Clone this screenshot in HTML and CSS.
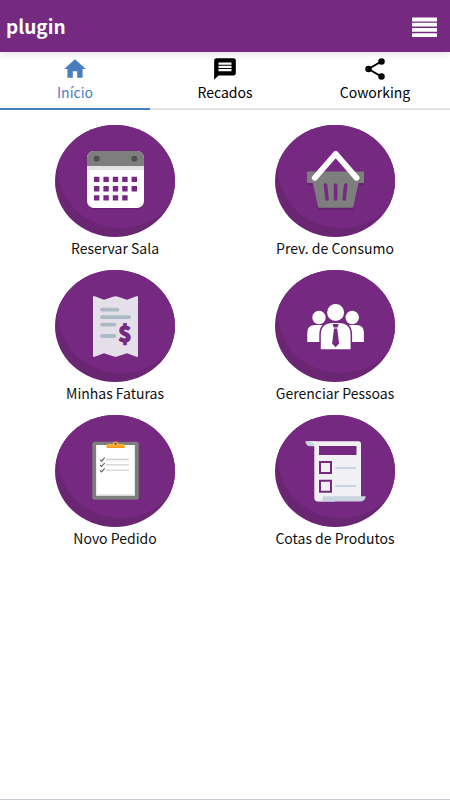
FILE: index.html
```html
<!DOCTYPE html>
<html lang="pt-BR">
<head>
<meta charset="utf-8">
<meta name="viewport" content="width=device-width, initial-scale=1">
<title>plugin</title>
<link rel="stylesheet" href="styles.css">
</head>
<body>
<header class="topbar">
  <h1 class="brand">plugin</h1>
  <button class="menu" type="button" aria-label="Menu">
    <svg width="25" height="20" viewBox="0 0 25 20" fill="#fff" aria-hidden="true">
      <rect y="0.500" width="25" height="4" rx="0.6"/><rect y="5.8" width="25" height="3.8" rx="0.6"/><rect y="11" width="25" height="3.8" rx="0.6"/><rect y="16.200" width="25" height="3.800" rx="0.6"/>
    </svg>
  </button>
</header>
<nav class="tabs">
  <a class="tab active" href="#inicio" aria-current="page">
    <svg class="tab-icon" viewBox="0 0 24 24" aria-hidden="true"><path d="M10 20v-6h4v6h5v-8h3L12 3 2 12h3v8z"/></svg>
    <span>Início</span>
  </a>
  <a class="tab" href="#recados">
    <svg class="tab-icon" viewBox="0 0 24 24" aria-hidden="true"><path d="M20 2H4c-1.1 0-2 .9-2 2v18l4-4h14c1.1 0 2-.9 2-2V4c0-1.100-.9-2-2-2zm-2 12H6v-2h12v2zm0-3H6V9h12v2zm0-3H6V6h12v2z"/></svg>
    <span>Recados</span>
  </a>
  <a class="tab" href="#coworking">
    <svg class="tab-icon" viewBox="0 0 24 24" aria-hidden="true"><path d="M6 12 18 5M6 12l12 7" fill="none" stroke="currentColor" stroke-width="1.700"/><circle cx="6" cy="12" r="3"/><circle cx="18" cy="5" r="3"/><circle cx="18" cy="19" r="3"/></svg>
    <span>Coworking</span>
  </a>
</nav>
<svg class="defs" width="0" height="0" aria-hidden="true">
  <defs>
    <clipPath id="disc-clip"><ellipse cx="60" cy="56" rx="60" ry="56"/></clipPath>
    <g id="disc">
      <ellipse cx="60" cy="56" rx="60" ry="56" fill="#6a2573"/>
      <ellipse cx="66" cy="44" rx="63" ry="59" fill="#762981" clip-path="url(#disc-clip)"/>
    </g>
  </defs>
</svg>
<main class="grid">
  <a class="tile" href="#reservar">
    <svg class="tile-icon" viewBox="0 0 120 112" aria-hidden="true">
      <use href="#disc"/>
      <rect x="32" y="27" width="57" height="57" rx="7" fill="#5d1d68" opacity="0.6"/>
      <rect x="32" y="26" width="57" height="57" rx="7" fill="#fff"/>
      <path d="M32 41h57v4H32z" fill="#e4e0e6"/>
      <path d="M32 41v-8a7 7 0 0 1 7-7h43a7 7 0 0 1 7 7v8z" fill="#7e7e7e"/>
      <circle cx="41.700" cy="33.700" r="3" fill="#4f4f4f"/><circle cx="79.300" cy="33.700" r="3" fill="#4f4f4f"/>
      <path fill="#762981" d="M39 51.700h5.400v5.400H39zM48.400 51.700h5.400v5.400h-5.400zM57.800 51.700h5.400v5.400h-5.400zM67.200 51.700h5.400v5.400h-5.400zM76.600 51.700H82v5.400h-5.400zM39 61h5.400v5.400H39zM48.400 61h5.400v5.400h-5.400zM57.800 61h5.400v5.400h-5.400zM67.200 61h5.400v5.400h-5.400zM76.600 61H82v5.400h-5.400zM39 70.200h5.400v5.400H39zM48.400 70.200h5.400v5.400h-5.400zM57.800 70.200h5.400v5.400h-5.400zM67.200 70.200h5.400v5.400h-5.400z"/>
    </svg>
    <span>Reservar Sala</span>
  </a>
  <a class="tile" href="#consumo">
    <svg class="tile-icon" viewBox="0 0 120 112" aria-hidden="true">
      <use href="#disc"/>
      <path d="M32 48h57v12h-5.500L78 85H43.500L38 60h-6z" fill="#5d1d68" opacity="0.6"/>
      <path d="M33 46.500h55a1 1 0 0 1 1 1V57a1 1 0 0 1-1 1h-4.500L78.400 81.500a1.500 1.500 0 0 1-1.500 1.200H44.500a1.500 1.500 0 0 1-1.500-1.200L37.800 58H33a1 1 0 0 1-1-1v-9.500a1 1 0 0 1 1-1z" fill="#7e7e7e"/>
      <path d="M50.500 60 52 74M60.600 60v14M70.700 60l-1.500 14" stroke="#762981" stroke-width="3.600" stroke-linecap="round"/>
      <path d="m39.800 52.800 20.900-24 20.900 24" fill="none" stroke="#fff" stroke-width="5.800" stroke-linecap="round" stroke-linejoin="round"/>
    </svg>
    <span>Prev. de Consumo</span>
  </a>
  <a class="tile" href="#faturas">
    <svg class="tile-icon" viewBox="0 0 120 112" aria-hidden="true">
      <use href="#disc"/>
      <path d="M38 27.300q0-1.700 1.700-1.100L49 29.800l10-3.300q1.500-.5 3 0L72 29.800l9.300-3.600q1.700-.6 1.700 1.100v58.400q0 1.700-1.700 1.100L72 83.200l-10 3.300q-1.500.5-3 0l-10-3.300-9.300 3.600q-1.700.6-1.700-1.100z" fill="#e5dfea"/>
      <path d="M47 39.700h15.500M47 47.200h27M47 54.700h12.500M47 66h12.500" stroke="#abbac4" stroke-width="3.800" stroke-linecap="round"/>
      <text class="coin" x="70" y="72" text-anchor="middle">$</text>
    </svg>
    <span>Minhas Faturas</span>
  </a>
  <a class="tile" href="#pessoas">
    <svg class="tile-icon" viewBox="0 0 120 112" aria-hidden="true">
      <use href="#disc"/>
      <g fill="#fff">
        <circle cx="44" cy="47.500" r="6.700"/><circle cx="77.200" cy="47.500" r="6.700"/>
        <path d="M32.300 72V62.500q0-7.500 7.500-7.500h41.600q7.500 0 7.500 7.500V72z"/>
      </g>
      <path d="M44.300 80V65q0-13.500 13-13.500h6.800q13 0 13 13.500v15z" fill="#762981"/>
      <circle cx="60.600" cy="42.400" r="10" fill="#762981"/>
      <circle cx="60.600" cy="42.400" r="8.500" fill="#fff"/>
      <path d="M45.800 79.300V65q0-12 12-12h5.800q12 0 12 12v14.300z" fill="#fff"/>
      <path d="M57.500 54h6.200l-1.200 3.400h-3.800zM59 58.400h3.200l1.900 15.200-3.500 3.600-3.500-3.600z" fill="#762981"/>
    </svg>
    <span>Gerenciar Pessoas</span>
  </a>
  <a class="tile" href="#pedido">
    <svg class="tile-icon" viewBox="0 0 120 112" aria-hidden="true">
      <use href="#disc"/>
      <rect x="37.300" y="26.800" width="46.500" height="57.900" rx="2.500" fill="#7e7e7e"/>
      <rect x="41" y="30" width="39" height="51" fill="#d8d8da"/>
      <rect x="41.500" y="30" width="38" height="49.500" fill="#fff"/>
      <path d="M51.700 33V30.500q0-1.500 1.500-1.500h4.300a3.200 3.200 0 0 1 6.200 0H68q1.700 0 1.700 1.500V33z" fill="#ffad33"/>
      <path d="M51.700 31.500h18V33H51.700z" fill="#f29a1f"/><circle cx="60.600" cy="28.700" r="1.200" fill="#6b6258"/>
      <path d="m45 44.600 1.500 1.500 3.200-3.400M45 50l1.500 1.500 3.200-3.400M45 55.400l1.500 1.500 3.200-3.400" fill="none" stroke="#666" stroke-width="1.200"/>
      <path d="M51 44.500h23M51 49.800h23M51 55.200h23" stroke="#cfd0d3" stroke-width="1.300"/>
    </svg>
    <span>Novo Pedido</span>
  </a>
  <a class="tile" href="#cotas">
    <svg class="tile-icon" viewBox="0 0 120 112" aria-hidden="true">
      <use href="#disc"/>
      <path d="M30.300 26.200q.5 5 5.500 5H40l1-5z" fill="#cad4df"/>
      <path d="M30.300 26.200H83.500q2.500 0 2.500 2.500V84H60v2.500H43q-3.700 0-3.700-3.700V31.200q0-3.500-3-4.300z" fill="#f1f1f3"/>
      <path d="M48 81.200h42.800q-.8 5.300-6 5.300H43.500q4.500 0 4.500-5.300z" fill="#cad4df"/>
      <path d="M44 31h37.500v9H44z" fill="#762981"/>
      <path d="M45 47h11v11H45zM45 65.800h11v11H45z" fill="none" stroke="#762981" stroke-width="2"/>
      <path d="M60.300 53h21M60.300 71h21" stroke="#cad4df" stroke-width="2"/>
    </svg>
    <span>Cotas de Produtos</span>
  </a>
</main>
<footer class="baseline"></footer>
</body>
</html>
```

FILE: styles.css
```css
* {
  box-sizing: border-box;
}

body {
  margin: 0;
  min-height: 100vh;
  display: flex;
  flex-direction: column;
  background: #fff;
  color: #111;
  font-family: "Noto Sans CJK JP", "Noto Sans", sans-serif;
  font-size: 14px;
  line-height: 20px;
}

a {
  color: inherit;
  text-decoration: none;
}

.topbar {
  position: relative;
  display: flex;
  align-items: center;
  justify-content: space-between;
  height: 52px;
  padding: 2px 13px 0 6px;
  background: #762981;
  box-shadow: 0 1px 8px rgba(0, 0, 0, 0.15);
}

.brand {
  margin: 0;
  padding-bottom: 2px;
  color: #fff;
  font-size: 19px;
  font-weight: 700;
  line-height: 28px;
}

.menu {
  display: flex;
  padding: 0;
  border: 0;
  background: none;
  cursor: pointer;
}

.tabs {
  display: grid;
  grid-template-columns: repeat(3, 1fr);
}

.tab {
  display: flex;
  flex-direction: column;
  align-items: center;
  height: 58px;
  padding-top: 4px;
  color: #000;
  border-bottom: 2px solid #e2e2e2;
}

.tab.active {
  color: #4a7dbf;
  border-bottom-color: #4a7dbf;
}

.tab-icon {
  width: 26px;
  height: 26px;
  fill: currentColor;
}

.defs {
  position: absolute;
}

.grid {
  display: grid;
  grid-template-columns: repeat(2, 1fr);
  row-gap: 12px;
  padding: 15px 5px;
}

.tile {
  display: flex;
  flex-direction: column;
  align-items: center;
  gap: 1px;
}

.tile-icon {
  width: 120px;
  height: 112px;
}

.coin {
  fill: #762981;
  stroke: #762981;
  stroke-width: 1;
  stroke-linejoin: round;
  font-size: 22px;
  font-weight: 900;
}

.baseline {
  height: 1px;
  margin-top: auto;
  background: #d0c3d4;
}
```
